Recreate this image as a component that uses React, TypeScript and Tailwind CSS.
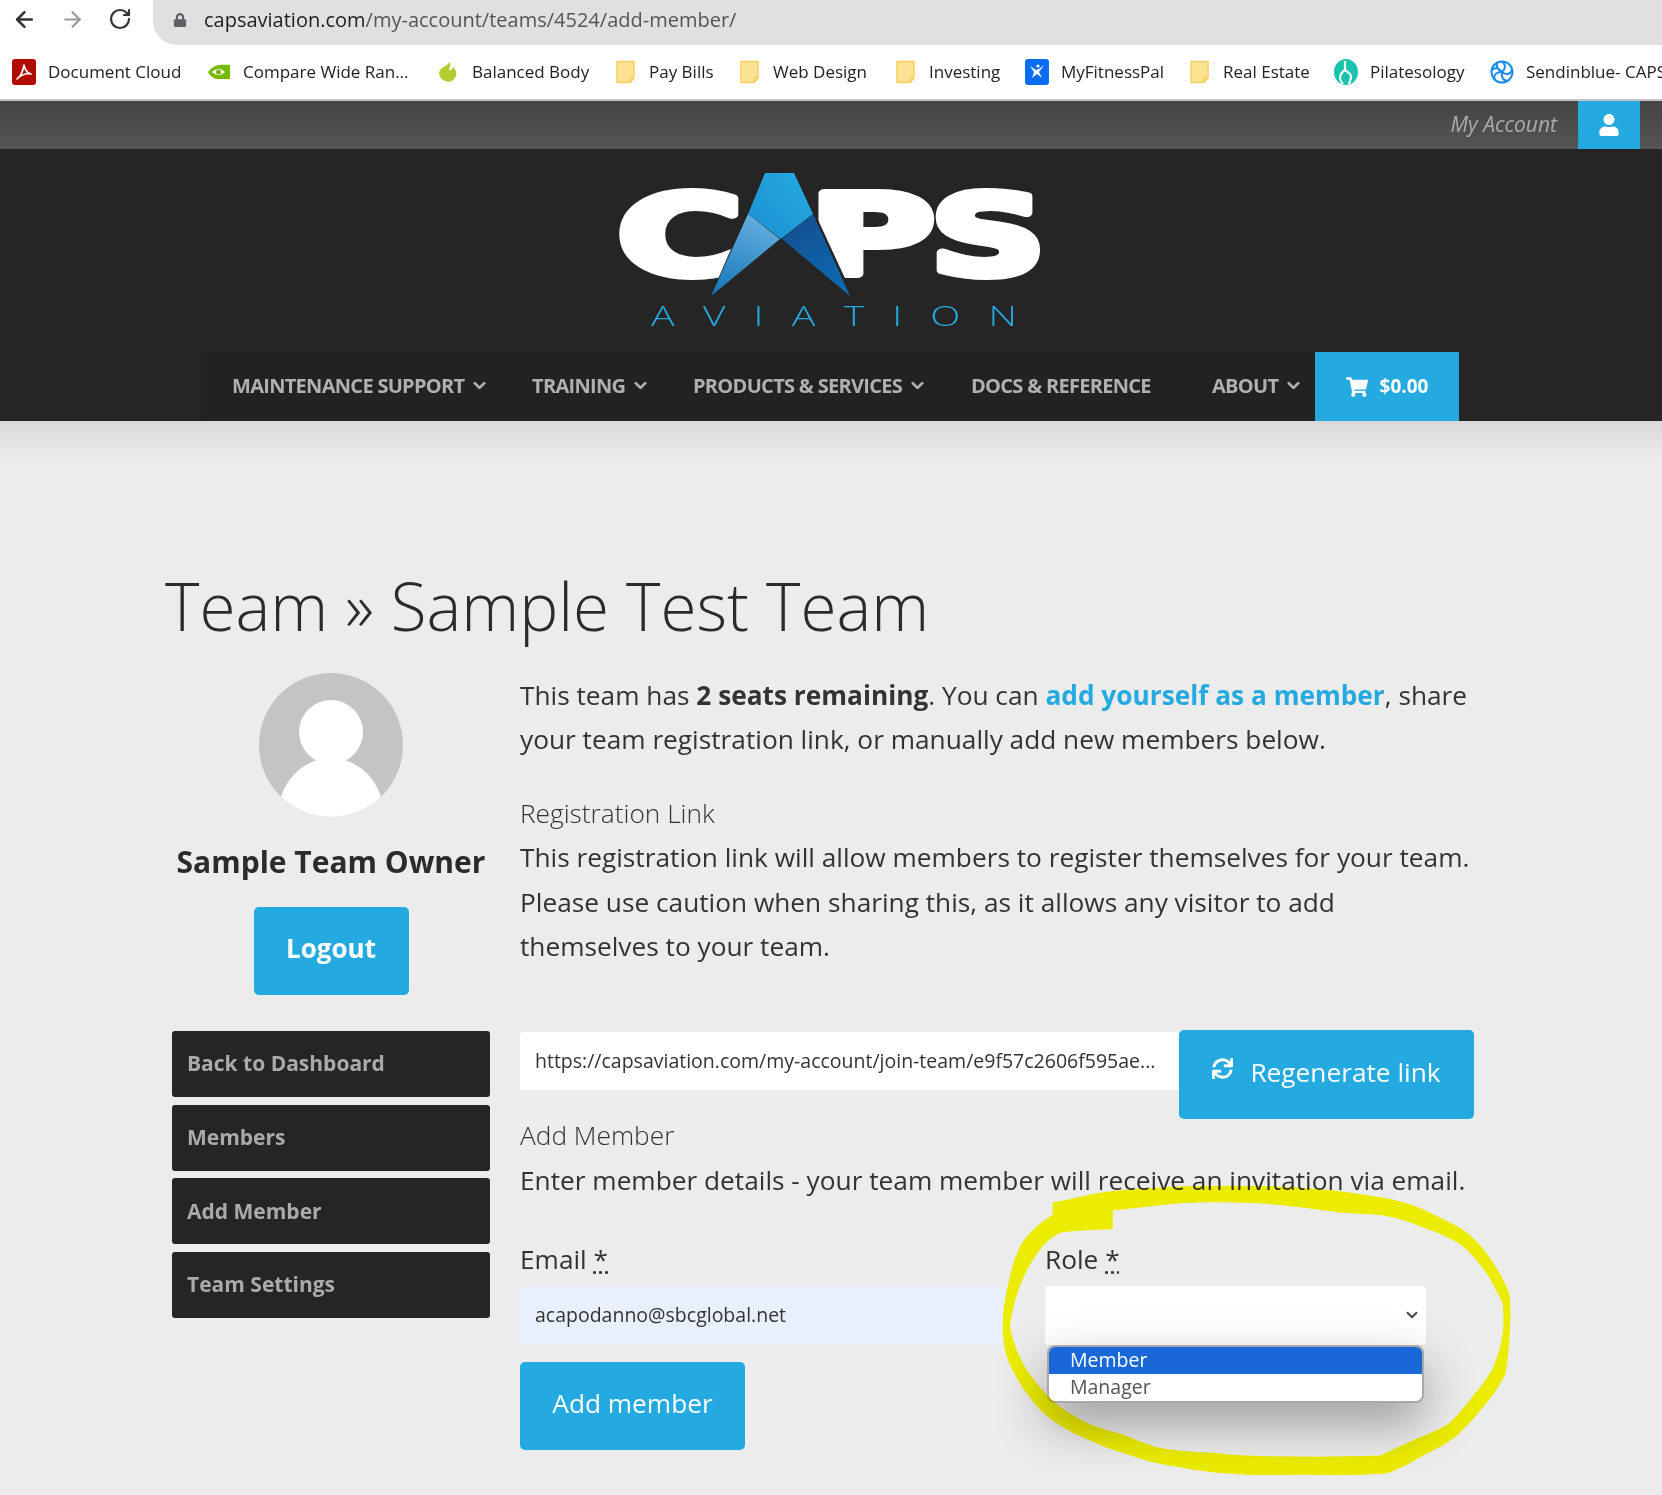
import { ArrowLeft, ArrowRight, ChevronDown, RotateCw } from 'lucide-react'
import type { ReactNode } from 'react'
import { FaLock, FaShoppingCart, FaSync, FaUser } from 'react-icons/fa'

const Folder = () => (
    <svg width="19" height="24" viewBox="0 0 20 24">
        <path d="M1 1h18v17l-4 5H1z" fill="#fde293" stroke="#f6cf5f" strokeWidth="1.5" />
        <path d="M15 23v-5h4" fill="none" stroke="#f6cf5f" strokeWidth="1.5" />
    </svg>
)

const Acrobat = () => (
    <svg width="24" height="26" viewBox="0 0 24 26">
        <rect width="24" height="26" rx="3" fill="#b30b00" />
        <path
            d="M5 20c3-2 6-8 7-14 1 5 3 8 7 9-5-1-10 1-14 5z"
            fill="none"
            stroke="#fff"
            strokeWidth="1.6"
            strokeLinejoin="round"
        />
    </svg>
)

const Nvidia = () => (
    <svg width="24" height="20" viewBox="0 0 24 20">
        <path d="M1 10c5-7 12-8 22-7v14H9c-3-1-6-3-8-7z" fill="#76b900" />
        <path d="M5 10c4-4 9-4 13 0-4 4-9 4-13 0z" fill="#fff" />
        <circle cx="11.5" cy="10" r="2.5" fill="#76b900" />
    </svg>
)

const Balanced = () => (
    <svg width="20" height="24" viewBox="0 0 20 24">
        <path d="M12 2c1 4-1 6-1 8 2 1 3-1 4-3 3 3 4 6 3 9-2 5-7 7-11 5-5-2-7-7-5-11 2-3 7-4 10-8z" fill="#b5cc2e" />
    </svg>
)

const FitnessPal = () => (
    <svg width="24" height="26" viewBox="0 0 24 26">
        <rect width="24" height="26" rx="3" fill="#0a6cf0" />
        <path d="M5 7l6 4 3-1 5-4-5 7 3 6-5-4-5 4 2-6z" fill="#fff" />
        <circle cx="13" cy="7" r="1.6" fill="#fff" />
    </svg>
)

const Pilates = () => (
    <svg width="24" height="26" viewBox="0 0 24 26">
        <ellipse cx="12" cy="13" rx="12" ry="13" fill="#19c3ac" />
        <path d="M11 2v8c0 3 6 3 6 8 0 3-2 5-2 7M11 11c-3 2-5 5-5 8 0 2 1 4 3 6" fill="none" stroke="#fff" strokeWidth="2.2" />
    </svg>
)

const Sendinblue = () => (
    <svg width="24" height="26" viewBox="0 0 24 26" fill="none" stroke="#1a8cf0" strokeWidth="2">
        <circle cx="12" cy="13" r="10.5" />
        <path d="M12 2.5c4 3 4 7 0 10.500M22 11c-2 5-6 5-10 2M18 22c-5 0-7-4-6-9M5 21c-2-4 0-8 7-8M2 11c3-3 7-2 10 2M7 3.500c-1 4 1 8 5 9.500" />
    </svg>
)

const bookmarks: { label: string; icon: ReactNode; box: string }[] = [
    { label: 'Document Cloud', icon: <Acrobat />, box: 'w-[195px]' },
    { label: 'Compare Wide Ran...', icon: <Nvidia />, box: 'w-[229px]' },
    { label: 'Balanced Body', icon: <Balanced />, box: 'w-[177px]' },
    { label: 'Pay Bills', icon: <Folder />, box: 'w-[124px]' },
    { label: 'Web Design', icon: <Folder />, box: 'w-[156px]' },
    { label: 'Investing', icon: <Folder />, box: 'w-[132px]' },
    { label: 'MyFitnessPal', icon: <FitnessPal />, box: 'w-[162px]' },
    { label: 'Real Estate', icon: <Folder />, box: 'w-[147px]' },
    { label: 'Pilatesology', icon: <Pilates />, box: 'w-[156px]' },
    { label: 'Sendinblue- CAPS', icon: <Sendinblue />, box: 'w-[200px]' },
]

const navItems: { label: string; box: string; arrow: boolean }[] = [
    { label: 'MAINTENANCE SUPPORT', box: 'w-[300px]', arrow: true },
    { label: 'TRAINING', box: 'w-[161px]', arrow: true },
    { label: 'PRODUCTS & SERVICES', box: 'w-[278px]', arrow: true },
    { label: 'DOCS & REFERENCE', box: 'w-[241px]', arrow: false },
    { label: 'ABOUT', box: 'w-[103px]', arrow: true },
]

const sideLinks = ['Back to Dashboard', 'Members', 'Add Member', 'Team Settings']

const Logo = () => (
    <svg width="500" height="200" viewBox="0 0 500 200" className="block">
        <defs>
            <linearGradient id="top" x1="0" y1="1" x2="1" y2="0">
                <stop offset="0" stopColor="#1c8fd0" />
                <stop offset="1" stopColor="#25abe3" />
            </linearGradient>
            <linearGradient id="left" x1="0.5" y1="0" x2="0.2" y2="1">
                <stop offset="0" stopColor="#62aede" />
                <stop offset="1" stopColor="#1877bb" />
            </linearGradient>
            <linearGradient id="right" x1="0.3" y1="0" x2="0.7" y2="1">
                <stop offset="0" stopColor="#144f90" />
                <stop offset="1" stopColor="#0d6bb2" />
            </linearGradient>
        </defs>
        <g fill="#fff" stroke="#fff" strokeWidth="8" strokeLinejoin="round" fontFamily="'DejaVu Sans', sans-serif" fontWeight="700" fontSize="110">
            <text x="36" y="124" textLength="126" lengthAdjust="spacingAndGlyphs">C</text>
            <text x="228" y="124" textLength="126" lengthAdjust="spacingAndGlyphs">P</text>
            <text x="349" y="124" textLength="116" lengthAdjust="spacingAndGlyphs">S</text>
        </g>
        <polygon points="128,150 184,20 214,20 274,150" fill="#252525" />
        <polygon points="184,23 213,23 232,64 200,89 167,64" fill="url(#top)" />
        <polygon points="167,64 199,89 130,146" fill="url(#left)" />
        <polygon points="232,64 201,89 269,146" fill="url(#right)" />
        <text
            x="70"
            y="176"
            textLength="394"
            lengthAdjust="spacingAndGlyphs"
            letterSpacing="20"
            fill="#25a9e0"
            fontFamily="'Open Sans', sans-serif"
            fontSize="28"
            fontWeight="300"
        >
            AVIATION
        </text>
    </svg>
)

const Avatar = () => (
    <svg width="144" height="144" viewBox="0 0 144 144" className="mx-auto block">
        <defs>
            <clipPath id="disc">
                <circle cx="72" cy="72" r="72" />
            </clipPath>
        </defs>
        <circle cx="72" cy="72" r="72" fill="#c4c4c4" />
        <circle cx="72" cy="59" r="32" fill="#fff" />
        <ellipse cx="72" cy="143" rx="53" ry="58" fill="#fff" clipPath="url(#disc)" />
    </svg>
)

// chisel marker: thick on the flats, thin up the sides, so outer and inner edge are traced apart
const Scribble = () => (
    <svg
        width="560"
        height="315"
        viewBox="0 0 1568 945"
        preserveAspectRatio="none"
        className="pointer-events-none absolute left-[980px] top-[1180px] mix-blend-multiply"
    >
        <path
            fillRule="evenodd"
            fill="#ffff00"
            stroke="#ffff00"
            strokeWidth="3"
            strokeLinejoin="round"
            d="M205 68C260 60 310 40 370 35C450 25 600 15 800 20C900 22 1000 30 1130 55C1180 65 1220 80 1240 90C1290 115 1320 130 1350 150C1390 180 1410 210 1420 225C1450 270 1470 310 1480 340C1485 380 1485 420 1482 450C1480 500 1475 550 1470 580C1450 630 1420 665 1400 690C1375 725 1350 750 1330 770C1300 795 1270 810 1240 825C1200 850 1160 875 1130 880C1050 885 980 885 900 882C820 885 760 885 700 880C650 875 600 870 560 860C520 855 480 845 450 835C410 820 375 810 340 795C305 778 270 765 240 745C215 730 190 710 170 690C150 665 140 650 125 630C105 595 90 570 80 540C70 510 65 480 65 450C65 420 65 400 70 370C80 310 90 260 105 220C115 190 130 170 150 150C170 130 190 115 205 105Z M370 90V145C320 148 270 150 230 155C210 162 195 175 180 190C160 215 145 240 130 270C118 295 108 320 100 350C92 380 85 410 82 440C88 470 95 495 105 520C118 550 132 578 150 600C168 625 188 650 210 670C240 695 270 715 300 730C330 745 365 755 400 765C435 780 465 795 500 805C550 815 600 818 650 820C700 826 750 830 800 830C900 832 1020 832 1120 828C1160 810 1195 790 1230 775C1260 762 1285 752 1310 735C1335 710 1360 680 1380 650C1405 620 1425 590 1440 560C1452 525 1462 495 1465 460C1468 430 1468 400 1465 370C1452 340 1438 310 1420 280C1400 250 1378 220 1350 195C1315 170 1280 155 1240 140C1205 125 1170 112 1130 105C1090 100 1050 100 1000 95C930 85 870 75 800 70C750 65 700 65 650 65C600 65 550 68 500 75C455 80 410 85 370 90Z"
        />
        <rect x="205" y="70" width="165" height="78" fill="#ffff00" />
    </svg>
)

export default function App() {
    return (
        <div className="relative h-[1495px] w-[1662px] overflow-hidden bg-[#ececec] font-['Open_Sans',sans-serif] text-[#333]">
            {/* Browser chrome */}
            <div className="flex h-[45px] items-center bg-white">
                <div className="flex w-[153px] items-center pb-[7px] pl-[12px] text-[#333]">
                    <ArrowLeft size={25} strokeWidth={2.4} />
                    <ArrowRight size={25} strokeWidth={2} className="ml-[23px] text-[#999]" />
                    <RotateCw size={24} strokeWidth={2.2} className="ml-[23px]" />
                </div>
                <div className="flex h-[45px] flex-1 items-center rounded-bl-[24px] bg-[#e0e0e0] pb-[6px] pl-[20px] text-[20px] text-[#555]">
                    <FaLock size={14} className="text-[#5f6368]" />
                    <span className="ml-[17px]">
                        <span className="text-[#202124]">capsaviation.com</span>/my-account/teams/4524/add-member/
                    </span>
                </div>
            </div>
            <div className="flex h-[54px] items-center overflow-hidden whitespace-nowrap bg-white pl-[12px] text-[17px] text-[#222]">
                {bookmarks.map((b) => (
                    <div key={b.label} className={`flex shrink-0 items-center ${b.box}`}>
                        <span className="flex w-[24px] shrink-0 justify-center">{b.icon}</span>
                        <span className="ml-[12px]">{b.label}</span>
                    </div>
                ))}
            </div>
            <div className="h-[2px] bg-[#c4c4c4]" />

            {/* Site header */}
            <div className="flex h-[48px] items-center justify-end bg-gradient-to-b from-[#444] to-[#555] pr-[22px]">
                <span className="mr-[21px] text-[21px] italic text-[#aaa]">My Account</span>
                <div className="flex h-[48px] w-[62px] items-center justify-center bg-[#24a9e1] text-white">
                    <FaUser size={22} />
                </div>
            </div>
            <header className="relative h-[272px] bg-[#252525]">
                <div className="flex justify-center pt-px">
                    <Logo />
                </div>
                <nav className="absolute bottom-0 left-[202px] flex h-[69px] items-center bg-[#222] pl-[30px] text-[20px] font-bold text-[#b0b0b0]">
                    {navItems.map((item) => (
                        <div key={item.label} className={`flex items-center pb-[2px] ${item.box}`}>
                            <span className="tracking-[-0.7px]">{item.label}</span>
                            {item.arrow && <ChevronDown size={19} strokeWidth={3.5} className="ml-[6px]" />}
                        </div>
                    ))}
                    <div className="flex h-[69px] w-[144px] items-center justify-center gap-[12px] bg-[#24a9e1] text-white">
                        <FaShoppingCart size={22} />
                        <span className="text-[19px]">$0.00</span>
                    </div>
                </nav>
            </header>
            <div className="h-[40px] bg-gradient-to-b from-[#d9d9d9] to-[#ececec]" />

            {/* Page content */}
            <main className="pl-[165px] pt-[100px]">
                <h1 className="h-[90px] text-[65.600px] font-light leading-[90px] text-[#2b2b2b]">Team » Sample Test Team</h1>
                <div className="mt-[22px] flex">
                    <aside className="ml-[7px] w-[318px]">
                        <Avatar />
                        <h4 className="mt-[23px] whitespace-nowrap text-center text-[30px] font-bold leading-[44px] text-[#2b2b2b]">
                            Sample Team Owner
                        </h4>
                        <div className="mt-[23px] flex justify-center">
                            <button className="h-[88px] w-[155px] rounded-[5px] bg-[#24a9e1] pb-[6px] text-[26px] font-bold text-white">
                                Logout
                            </button>
                        </div>
                        <div className="mt-[36px] flex flex-col gap-[7.700px]">
                            {sideLinks.map((link) => (
                                <div
                                    key={link}
                                    className="flex h-[66px] items-center rounded-[3px] bg-[#252525] pl-[15px] text-[21px] font-bold text-[#aaa]"
                                >
                                    {link}
                                </div>
                            ))}
                        </div>
                    </aside>

                    <section className="ml-[30px] w-[955px] whitespace-nowrap text-[26.250px] leading-[44.400px]">
                        <p>
                            This team has <strong>2 seats remaining</strong>. You can{' '}
                            <strong className="text-[#24a9e1]">add yourself as a member</strong>, share
                            <br />
                            your team registration link, or manually add new members below.
                        </p>
                        <h5 className="mt-[29px] font-light">Registration Link</h5>
                        <p>
                            This registration link will allow members to register themselves for your team.
                            <br />
                            Please use caution when sharing this, as it allows any visitor to add
                            <br />
                            themselves to your team.
                        </p>

                        <div className="mt-[62px] flex h-[83px] items-start">
                            <div className="mt-[2px] flex h-[58px] w-[660px] items-center overflow-hidden rounded-l-[3px] bg-white pl-[15px] text-[19.500px] text-[#333]">
                                https://capsaviation.com/my-account/join-team/e9f57c2606f595ae...
                            </div>
                            <button className="-ml-px flex h-[89px] w-[295px] items-center justify-center rounded-[5px] bg-[#24a9e1] pb-[6px] text-white">
                                <FaSync size={21} className="mb-[6px]" />
                                <span className="ml-[17px]">Regenerate link</span>
                            </button>
                        </div>

                        <h5 className="font-light">Add Member</h5>
                        <p>Enter member details - your team member will receive an invitation via email.</p>

                        <div className="mt-[35px] flex">
                            <div className="w-[485px]">
                                <label>
                                    Email <span className="underline decoration-dotted">*</span>
                                </label>
                                <div className="mt-[4px] flex h-[59px] items-center rounded-[3px] bg-[#e8f0fe] pl-[15px] text-[19.500px]">
                                    acapodanno@sbcglobal.net
                                </div>
                            </div>
                            <div className="ml-[40px] w-[381px]">
                                <label>
                                    Role <span className="underline decoration-dotted">*</span>
                                </label>
                                <div className="mt-[4px] flex h-[59px] items-center justify-end rounded-[3px] bg-white pr-[5px] text-[#444]">
                                    <ChevronDown size={18} strokeWidth={2.5} />
                                </div>
                            </div>
                        </div>

                        <button className="mt-[17px] h-[88px] w-[225px] rounded-[5px] bg-[#24a9e1] pb-[5px] text-white">Add member</button>
                    </section>
                </div>
            </main>

            {/* Open select list and the yellow marker over it */}
            <div className="absolute left-[1047px] top-[1345px] w-[377px] overflow-hidden rounded-[8px] border-2 border-[#a8a8a8] bg-white text-[19.500px] shadow-[0_20px_50px_rgba(0,0,0,0.35)]">
                <div className="h-[27px] bg-[#1a68d8] pl-[21px] leading-[25px] text-white">Member</div>
                <div className="h-[27px] pl-[21px] leading-[25px] text-[#555]">Manager</div>
            </div>
            <Scribble />
        </div>
    )
}
